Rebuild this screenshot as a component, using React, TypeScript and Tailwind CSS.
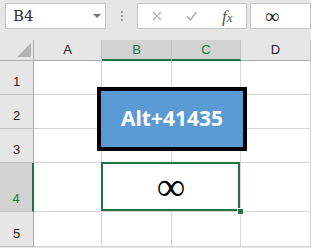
import React from "react";

const COLS = ["A", "B", "C", "D"];
const ROWS = [1, 2, 3, 4, 5];

export default function App() {
  return (
    <div className="relative w-[311px] h-[248px] overflow-hidden bg-[#e6e6e6] font-['Liberation_Sans',sans-serif]">
      {/* formula bar */}
      <div className="flex h-[40px] items-start pt-[3px] pl-[5px]">
        <div className="flex h-[26px] w-[101px] items-center justify-between border border-[#c6c6c6] bg-white pl-[7px] pr-[4px]">
          <span className="font-['DejaVu_Serif',serif] text-[15px] font-light text-[#333]">B4</span>
          <span className="h-0 w-0 border-x-[4px] border-t-[4px] border-x-transparent border-t-[#777]" />
        </div>
        <div className="flex h-[26px] w-[31px] flex-col items-center justify-center gap-[2px]">
          <span className="h-[2px] w-[2px] bg-[#a0a0a0]" />
          <span className="h-[2px] w-[2px] bg-[#a0a0a0]" />
          <span className="h-[2px] w-[2px] bg-[#a0a0a0]" />
        </div>
        <div className="flex h-[26px] w-[110px] items-center border border-[#c6c6c6] bg-white">
          <svg width="84" height="24" viewBox="0 0 84 24">
            <path d="M15 8l8 8M23 8l-8 8" stroke="#b5b5b5" strokeWidth="1.4" fill="none" />
            <path d="M49 12.5l3.5 3.5 6-8" stroke="#b5b5b5" strokeWidth="1.8" fill="none" />
          </svg>
          <span className="font-['Liberation_Serif',serif] text-[17px] leading-none italic text-[#555]">
            f<span className="text-[13px]">x</span>
          </span>
        </div>
        <div className="ml-[3px] flex h-[26px] flex-1 items-center border border-[#c6c6c6] bg-white pl-[14px]">
          <span className="font-['Liberation_Serif',serif] text-[20px] leading-none text-[#222]">∞</span>
        </div>
      </div>

      {/* sheet */}
      <div className="grid grid-cols-[34px_68px_70px_69px_70px] grid-rows-[21px_34px_34px_34px_49px_35px]">
        <div className="flex items-end justify-end border-r border-b border-[#ababab] pr-[2px] pb-[3px]">
          <svg width="14" height="14" viewBox="0 0 14 14">
            <path d="M14 0V14H0Z" fill="#b4b4b4" />
          </svg>
        </div>
        {COLS.map((c) => {
          const sel = c === "B" || c === "C";
          return (
            <div
              key={c}
              className={
                sel
                  ? "flex items-center justify-center border-r border-[#c0c0c0] border-b-2 border-b-[#217346] bg-[#d2d2d2] text-[13px] text-[#217346]"
                  : "flex items-center justify-center border-r border-b border-[#c0c0c0] border-b-[#ababab] text-[13px] text-[#222]"
              }
            >
              {c}
            </div>
          );
        })}

        {ROWS.map((r) => (
          <React.Fragment key={r}>
            <div
              className={
                r === 4
                  ? "flex items-end justify-center border-b border-[#c0c0c0] border-r-2 border-r-[#217346] bg-[#d2d2d2] pb-[3px] text-[13px] text-[#217346]"
                  : "flex items-end justify-center border-b border-[#c0c0c0] border-r border-r-[#ababab] pb-[3px] text-[13px] text-[#222]"
              }
            >
              {r}
            </div>
            <div className="border-r border-b border-[#d4d4d4] bg-white" />
            {r === 4 ? (
              <div className="relative col-span-2 flex items-center justify-center border-r border-b border-[#d4d4d4] bg-white">
                <span className="font-['Liberation_Serif',serif] text-[40px] leading-none text-black">∞</span>
                <span className="absolute -left-[1px] -top-[1px] right-0 bottom-0 border-2 border-[#217346]" />
                <span className="absolute -right-[3px] -bottom-[3px] h-[5px] w-[5px] bg-[#217346] outline outline-1 outline-white" />
              </div>
            ) : (
              <>
                <div className="border-r border-b border-[#d4d4d4] bg-white" />
                <div className="border-r border-b border-[#d4d4d4] bg-white" />
              </>
            )}
            <div className="border-r border-b border-[#d4d4d4] bg-white" />
          </React.Fragment>
        ))}
      </div>

      {/* floating shape */}
      <div className="absolute left-[97px] top-[87px] flex h-[64px] w-[150px] items-center justify-center border-4 border-black bg-[#5b9bd5]">
        <span className="font-['Open_Sans',sans-serif] text-[21px] font-bold text-white">Alt+41435</span>
      </div>
    </div>
  );
}
